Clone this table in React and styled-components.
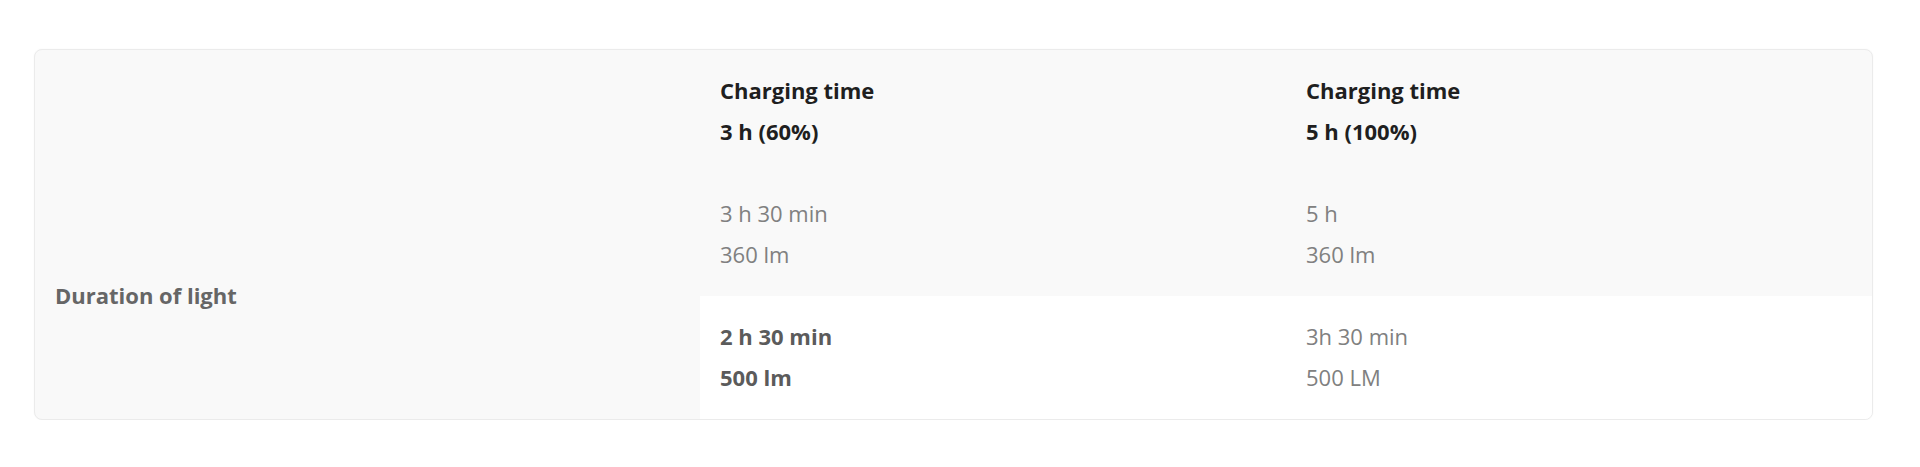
import React from "react";
import styled, { createGlobalStyle } from "styled-components";

const Global = createGlobalStyle`
  html, body { margin: 0; padding: 0; background: #ffffff; }
  body { font-family: "Open Sans", "Noto Sans", Arial, sans-serif; }
`;

const Page = styled.div`
  padding: 49px 47px 0 34px;
`;

const Card = styled.div`
  display: grid;
  grid-template-columns: 665px 1fr 1fr;
  background: #f9f9f9;
  border: 1px solid #ebebeb;
  border-radius: 8px;
  box-shadow: 0 0 2px rgba(0, 0, 0, 0.04);
  overflow: hidden;
`;

const Cell = styled.div`
  padding: 20px 20px 21px;
  font-size: 22px;
  line-height: 41px;
  background: ${(p) => (p.$white ? "#ffffff" : "transparent")};
  color: ${(p) => (p.$strong ? "#5b5b5b" : "#808080")};
  font-weight: ${(p) => (p.$strong ? 700 : 400)};
`;

const HeadCell = styled(Cell)`
  color: #1f1f1f;
  font-weight: 700;
`;

const LabelCell = styled(Cell)`
  grid-row: 2 / span 2;
  grid-column: 1;
  display: flex;
  align-items: center;
  color: #666666;
  font-weight: 700;
`;

const Line = styled.div``;

const columns = [
  { head: ["Charging time", "3 h (60%)"], r1: ["3 h 30 min", "360 lm"], r2: ["2 h 30 min", "500 lm"], strong: true },
  { head: ["Charging time", "5 h (100%)"], r1: ["5 h", "360 lm"], r2: ["3h 30 min", "500 LM"], strong: false },
];

export default function App() {
  return (
    <>
      <Global />
      <Page>
        <Card>
          <Cell />
          {columns.map((c, i) => (
            <HeadCell key={"h" + i}>
              {c.head.map((t) => (
                <Line key={t}>{t}</Line>
              ))}
            </HeadCell>
          ))}
          <LabelCell>Duration of light</LabelCell>
          {columns.map((c, i) => (
            <Cell key={"a" + i}>
              {c.r1.map((t) => (
                <Line key={t}>{t}</Line>
              ))}
            </Cell>
          ))}
          {columns.map((c, i) => (
            <Cell key={"b" + i} $white $strong={c.strong}>
              {c.r2.map((t) => (
                <Line key={t}>{t}</Line>
              ))}
            </Cell>
          ))}
        </Card>
      </Page>
    </>
  );
}
